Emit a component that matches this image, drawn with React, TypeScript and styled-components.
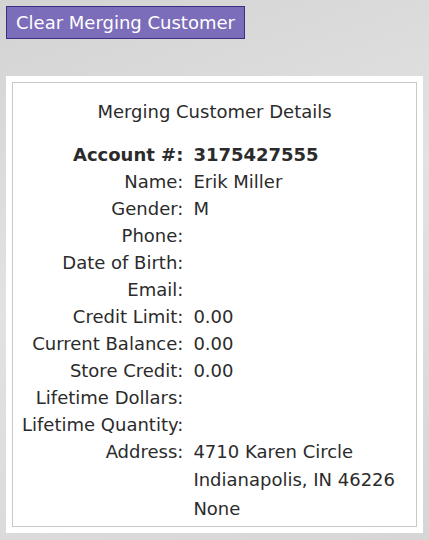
import React from "react";
import styled, { createGlobalStyle } from "styled-components";

const Global = createGlobalStyle`
  html, body { margin: 0; padding: 0; }
  body {
    width: 429px;
    height: 540px;
    overflow: hidden;
    background: linear-gradient(160deg, #d3d3d3 0%, #e2e2e2 45%, #d6d6d6 100%);
    font-family: "DejaVu Sans", Verdana, sans-serif;
    color: #2b2b2b;
  }
`;

const Page = styled.div`
  padding: 6px 6px 0 6px;
  display: flex;
  flex-direction: column;
  align-items: flex-start;
`;

const ClearButton = styled.button`
  height: 33px;
  padding: 0 9px;
  background: #7b6db9;
  border: 1px solid #3b2f84;
  color: #ffffff;
  font-family: "DejaVu Sans", Verdana, sans-serif;
  font-size: 18px;
  line-height: 31px;
  cursor: pointer;
`;

const Panel = styled.div`
  margin-top: 37px;
  align-self: stretch;
  background: #ffffff;
  padding: 6px;
  height: 457px;
  box-sizing: border-box;
`;

const DetailsBox = styled.div`
  border: 1px solid #c8c8c8;
  height: 100%;
  box-sizing: border-box;
  padding: 15px 9px 0 9px;
`;

const Title = styled.div`
  text-align: center;
  font-size: 18px;
  line-height: 27px;
  margin-bottom: 16px;
`;

const Rows = styled.div`
  display: grid;
  grid-template-columns: max-content 1fr;
  column-gap: 10px;
  font-size: 18px;
  line-height: 27px;
`;

const Label = styled.div<{ $bold?: boolean }>`
  text-align: right;
  font-weight: ${(p) => (p.$bold ? 700 : 400)};
  white-space: nowrap;
`;

const Value = styled.div<{ $bold?: boolean }>`
  font-weight: ${(p) => (p.$bold ? 700 : 400)};
  white-space: nowrap;
`;

const AddressLine = styled.div`
  line-height: 29px;
  &:first-child { line-height: 27px; }
`;

const rows: [string, string][] = [
  ["Name:", "Erik Miller"],
  ["Gender:", "M"],
  ["Phone:", ""],
  ["Date of Birth:", ""],
  ["Email:", ""],
  ["Credit Limit:", "0.00"],
  ["Current Balance:", "0.00"],
  ["Store Credit:", "0.00"],
  ["Lifetime Dollars:", ""],
  ["Lifetime Quantity:", ""],
];

export default function App() {
  return (
    <>
      <Global />
      <Page>
        <ClearButton>Clear Merging Customer</ClearButton>
        <Panel>
          <DetailsBox>
            <Title>Merging Customer Details</Title>
            <Rows>
              <Label $bold>Account #:</Label>
              <Value $bold>3175427555</Value>
              {rows.map(([l, v]) => (
                <React.Fragment key={l}>
                  <Label>{l}</Label>
                  <Value>{v}</Value>
                </React.Fragment>
              ))}
              <Label>Address:</Label>
              <Value>
                <AddressLine>4710 Karen Circle</AddressLine>
                <AddressLine>Indianapolis, IN 46226</AddressLine>
                <AddressLine>None</AddressLine>
              </Value>
            </Rows>
          </DetailsBox>
        </Panel>
      </Page>
    </>
  );
}
